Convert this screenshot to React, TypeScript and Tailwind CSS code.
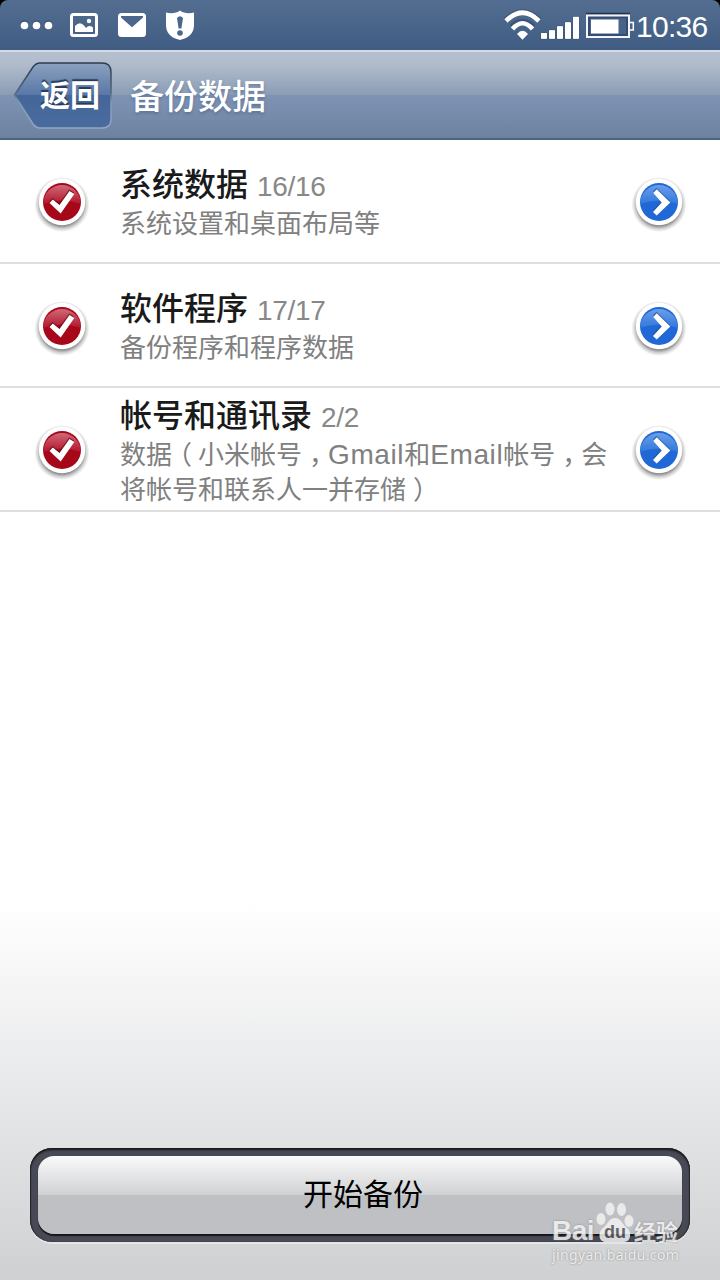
import type { ReactNode } from "react";

interface BackupItem {
  title: string;
  count: string;
  desc: ReactNode;
}

function Latin({ children }: { children: ReactNode }) {
  return <span className="font-['Liberation_Sans'] text-[28px] tracking-[0.6px] leading-none">{children}</span>;
}

// full-width punctuation, centred in its cell
function Punct({ children }: { children: ReactNode }) {
  return <span className="ml-[7px] mr-[6px] [font-feature-settings:'halt']">{children}</span>;
}

const ITEMS: BackupItem[] = [
  { title: "系统数据", count: "16/16", desc: "系统设置和桌面布局等" },
  { title: "软件程序", count: "17/17", desc: "备份程序和程序数据" },
  {
    title: "帐号和通讯录",
    count: "2/2",
    desc: (
      <>
        数据<Punct>（</Punct>小米帐号<Punct>，</Punct><Latin>Gmail</Latin>和<Latin>Email</Latin>帐号<Punct>，</Punct>会
        <br />
        将帐号和联系人一并存储<Punct>）</Punct>
      </>
    ),
  },
];

function StatusBar() {
  return (
    <div className="bg-black">
      <div className="h-[50px] rounded-t-[8px] bg-linear-to-b from-[#536e90] to-[#405c83] flex items-start justify-between text-white">
        <svg width="200" height="50" viewBox="0 0 200 50" fill="white">
          <g fill="#263c5a" opacity=".55">
            <circle cx="24.5" cy="24.5" r="4" />
            <circle cx="36.5" cy="24.5" r="4" />
            <circle cx="48.5" cy="24.5" r="4" />
          </g>
          <circle cx="24.5" cy="25.5" r="3.8" />
          <circle cx="36.5" cy="25.5" r="3.8" />
          <circle cx="48.5" cy="25.5" r="3.8" />
          <rect x="71.5" y="14.5" width="25" height="21" rx="2" fill="none" stroke="white" strokeWidth="3" />
          <path d="M75 32V26Q80 20.500 84.500 26L86 28Q89 24.500 93 27.500V32Z" />
          <circle cx="89" cy="21" r="2.2" />
          <rect x="118" y="13" width="28" height="24" rx="3.5" />
          <path d="M121 16H143V17.500L132 27.300L121 17.500Z" fill="#4b678b" />
          <path d="M180 10.500C183 13 189 14 194 12.500V25C194 33 189 38 180 40C171 38 166 33 166 25V12.500C171 14 177 13 180 10.500Z" />
          <path d="M177 18Q180 14.500 183 18L181.400 28.500H178.600Z" fill="#4b678b" />
          <circle cx="180" cy="33" r="2.800" fill="#4b678b" />
        </svg>
        <div className="flex">
          <svg width="136" height="50" viewBox="500 0 136 50" fill="white">
            <g fill="none" stroke="#31496b" strokeWidth="6" opacity=".6">
              <path d="M505.500 20.500Q522.500 4.500 539.500 20.500" />
              <path d="M512 27Q522.500 17 533 27" />
            </g>
            <g fill="none" stroke="white" strokeWidth="4.600">
              <path d="M506 21Q522.500 4.500 539 21" />
              <path d="M512.500 29Q522.500 17.500 532.500 29" />
            </g>
            <path d="M517 34Q522.500 27.500 528 34L522.500 39.800Z" />
            <g stroke="#31496b" strokeOpacity=".5" strokeWidth="1">
              <path d="M541 33h6v6h-6zM549 30h6v9h-6zM557 26h6v13h-6zM565 22h6v17h-6zM573 16.500h6v22.500h-6z" />
            </g>
            <path d="M541 33h6v5.500h-6zM549 30.500h6v8h-6zM557 26.500h6v12h-6zM565 22.500h6v16h-6zM573 17h6v21.500h-6z" />
            <path d="M586 13.500H630" stroke="#1f3451" strokeWidth="1.500" />
            <rect x="587" y="15.500" width="42" height="21.500" fill="#344c6f" stroke="#f4f4f8" strokeWidth="2" />
            <rect x="590" y="18.500" width="36" height="15.500" fill="#48638a" />
            <rect x="591" y="19.500" width="27.500" height="14" />
            <path d="M630 22.500h3.300v7.500h-3.300" fill="none" stroke="white" strokeWidth="1.500" />
          </svg>
          <div className="w-[84px] pt-[8px] font-['Liberation_Sans'] text-[30px] leading-[38px] tracking-[-0.7px]">10:36</div>
        </div>
      </div>
    </div>
  );
}

function Header() {
  return (
    <div className="h-[90px] border-t-2 border-[#d3dae3] border-b-2 border-b-[#4e6383] bg-[linear-gradient(180deg,#b4c0cf_0%,#b0bccc_15%,#8a9cb4_50%,#7f94b5_50%,#6c829f_100%)] flex items-start">
      <div className="grid mt-[8px] ml-[12px]">
        <svg className="col-start-1 row-start-1" width="102" height="72" viewBox="12 60 102 72">
          <defs>
            <linearGradient id="back" x1="0" y1="0" x2="0" y2="1">
              <stop offset="0" stopColor="#8ba1bf" />
              <stop offset=".5" stopColor="#5877a6" />
              <stop offset=".5" stopColor="#456699" />
              <stop offset="1" stopColor="#496b9e" />
            </linearGradient>
            <linearGradient id="rim" x1="0" y1="0" x2="0" y2="1">
              <stop offset="0" stopColor="#2c3b50" />
              <stop offset=".45" stopColor="#526681" />
              <stop offset=".6" stopColor="#8298b9" />
              <stop offset="1" stopColor="#93a6c3" />
            </linearGradient>
          </defs>
          <path
            d="M14.500 95L33 67Q36 63 40 63H102Q111 63 111 72V119Q111 128 102 128H40Q36 128 33 124Z"
            fill="url(#back)"
            stroke="url(#rim)"
            strokeWidth="1.500"
          />
        </svg>
        <span className="col-start-1 row-start-1 pl-[28px] pt-[11px] text-[30px] leading-[44px] font-bold text-white [text-shadow:0_-2px_1px_#263b5b]">返回</span>
      </div>
      <h1 className="ml-[16px] mt-[19px] text-[34px] leading-[48px] font-medium text-white [text-shadow:0_2px_3px_#4c638999]">备份数据</h1>
    </div>
  );
}

const CHECK = "M17.500 31L20.800 27.500L27.500 33L37.500 18.900L42.300 22L28.700 41.500Z";
const ARROW = "M24.300 20.900L27.700 17.300L41.300 30.500L27.700 43.500L24 40L32.700 30.500Z";

function Badge({ kind }: { kind: "check" | "arrow" }) {
  const check = kind === "check";
  const glyph = check ? CHECK : ARROW;
  return (
    <svg width="60" height="62" viewBox="0 0 60 62" className="shrink-0 mt-[3px]">
      <defs>
        <radialGradient id="shade">
          <stop offset=".75" stopColor="#000" stopOpacity=".5" />
          <stop offset=".88" stopColor="#000" stopOpacity=".18" />
          <stop offset="1" stopColor="#000" stopOpacity="0" />
        </radialGradient>
        <linearGradient id={kind} x1="0" y1="0" x2="0" y2="1">
          <stop offset="0" stopColor={check ? "#cf6876" : "#6b9ee8"} />
          <stop offset="1" stopColor={check ? "#b4142c" : "#3077dc"} />
        </linearGradient>
      </defs>
      <circle cx="30" cy="32.500" r="27.500" fill="url(#shade)" />
      <circle cx="30" cy="30" r="23.200" fill="white" />
      <circle cx="30" cy="30" r="19" fill={check ? "#a70819" : "#1f68d6"} />
      <path d="M11 32A19 19 0 0 1 49 32Q30 25 11 32Z" fill={`url(#${kind})`} />
      <path d={glyph} transform="translate(-.3 -1.500)" fill={check ? "#5b0712" : "#174f9f"} opacity=".7" />
      <path d={glyph} fill="white" />
    </svg>
  );
}

function Row({ item }: { item: BackupItem }) {
  return (
    <div className="h-[124px] border-b-2 border-[#dedede] flex items-center pl-[32px]">
      <Badge kind="check" />
      <div className="w-[537px] pl-[28px] whitespace-nowrap">
        <div className="h-[41px] flex items-baseline gap-[9px]">
          <span className="text-[32px] leading-[39px] font-medium text-[#1a1a1a]">{item.title}</span>
          <span className="font-['Liberation_Sans'] text-[28px] leading-[39px] tracking-[-0.3px] text-[#888]">{item.count}</span>
        </div>
        <div className="text-[26px] leading-[35px] text-[#808080]">{item.desc}</div>
      </div>
      <Badge kind="arrow" />
    </div>
  );
}

function Watermark() {
  return (
    <div className="absolute left-[552px] top-[1201px] w-[130px] text-[#f2f2f2] opacity-85 [text-shadow:0_0_2px_#777]">
      <div className="flex items-end h-[45px] whitespace-nowrap">
        <span className="w-[44px] font-['Liberation_Sans'] font-bold text-[28px] leading-[30px] tracking-[-0.5px]">Bai</span>
        <div className="grid w-[38px] h-[45px]">
          <svg className="col-start-1 row-start-1" width="38" height="44" viewBox="0 0 38 44" fill="#f2f2f2">
            <ellipse cx="5" cy="18" rx="4.500" ry="6" />
            <ellipse cx="14" cy="8" rx="4.500" ry="6.500" />
            <ellipse cx="25.500" cy="8.500" rx="4.500" ry="6.500" />
            <ellipse cx="33" cy="20" rx="4.500" ry="6" />
            <path d="M19 17C25 17 26 23 31 27C36 31 35 41 28 41H10C2 41 2 31 7 27C12 23 13 17 19 17Z" />
          </svg>
          <span className="col-start-1 row-start-1 pt-[20px] pl-[8px] font-['Liberation_Sans'] font-bold text-[18px] leading-[22px] text-[#55565d] [text-shadow:none]">du</span>
        </div>
        <span className="text-[22px] leading-[32px] font-bold">经验</span>
      </div>
      <div className="font-['Noto_Sans'] text-[14px] leading-[17px] tracking-[0.35px]">jingyan.baidu.com</div>
    </div>
  );
}

export default function App() {
  return (
    <div className="relative w-[720px] h-[1280px] overflow-hidden flex flex-col bg-white font-['Noto_Sans_CJK_SC',sans-serif]">
      <StatusBar />
      <Header />
      <div className="flex-1 flex flex-col bg-[linear-gradient(180deg,#fff_0%,#fff_67%,#e2e3e5_87%,#cfd0d2_100%)]">
        {ITEMS.map((item) => (
          <Row key={item.title} item={item} />
        ))}
        <div className="mt-auto mx-[30px] mb-[38px] h-[94px] rounded-[22px] p-[8px] bg-[#474a54] shadow-[0_2px_0_#e4e5e7,inset_0_2px_2px_#17181b,inset_1px_0_1px_#292b32,inset_-1px_0_1px_#292b32]">
          <button className="block w-full h-[78px] pl-[6px] rounded-[16px] bg-[linear-gradient(180deg,#fafafa_0%,#d0d1d3_50%,#bfc0c4_50%,#bfc0c4_100%)] shadow-[0_2px_1px_#15171a] text-[30px] leading-[73px] text-black">
            <span className="block h-[78px]">开始备份</span>
          </button>
        </div>
      </div>
      <Watermark />
    </div>
  );
}
